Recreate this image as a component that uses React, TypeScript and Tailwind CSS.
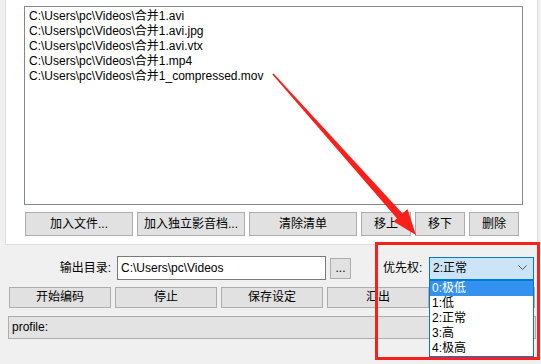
import React from "react";

const files = [
  "C:\\Users\\pc\\Videos\\合并1.avi",
  "C:\\Users\\pc\\Videos\\合并1.avi.jpg",
  "C:\\Users\\pc\\Videos\\合并1.avi.vtx",
  "C:\\Users\\pc\\Videos\\合并1.mp4",
  "C:\\Users\\pc\\Videos\\合并1_compressed.mov",
];

const priorities = ["0:极低", "1:低", "2:正常", "3:高", "4:极高"];

function Btn({ w, h, children }: { w: string; h: string; children: React.ReactNode }) {
  return (
    <div
      className={`${w} ${h} flex shrink-0 items-center justify-center border border-[#adadad] bg-[#e1e1e1]`}
    >
      {children}
    </div>
  );
}

export default function App() {
  return (
    <div className="relative h-[364px] w-[541px] overflow-hidden bg-[#f0f0f0] font-['Liberation_Sans','Noto_Sans_CJK_SC',sans-serif] text-[12px] leading-[15px] text-black">
      {/* file list panel */}
      <div className="ml-[5px] h-[245px] w-[533px] border-x border-b border-[#dcdcdc] bg-white pt-[6px]">
        <div className="ml-[18px] h-[199px] w-[499px] border border-[#828790] pl-[4px] pt-[2px]">
          {files.map((f) => (
            <div key={f} className="h-[15px] whitespace-nowrap">
              {f}
            </div>
          ))}
        </div>
        <div className="ml-[19px] mt-[7px] flex gap-[4px]">
          <Btn w="w-[108px]" h="h-[24px]">加入文件...</Btn>
          <Btn w="w-[108px]" h="h-[24px]">加入独立影音档...</Btn>
          <Btn w="w-[108px]" h="h-[24px]">清除清单</Btn>
          <Btn w="w-[50px]" h="h-[24px]">移上</Btn>
          <Btn w="w-[50px]" h="h-[24px]">移下</Btn>
          <Btn w="w-[50px]" h="h-[24px]">删除</Btn>
        </div>
      </div>

      {/* output dir + priority */}
      <div className="mt-[11px] flex items-center">
        <div className="w-[111px] text-right">输出目录:</div>
        <div className="ml-[6px] flex h-[24px] w-[209px] items-center border border-[#7a7a7a] bg-white pl-[3px]">
          C:\Users\pc\Videos
        </div>
        <div className="ml-[4px]">
          <Btn w="w-[21px]" h="h-[21px]">...</Btn>
        </div>
        <div className="ml-[32px] w-[46px]">优先权:</div>
        <div className="relative z-10">
          <div className="flex h-[23px] w-[105px] items-center justify-between border border-[#0078d7] bg-[#cce4f7] pl-[3px] pr-[6px]">
            <span>2:正常</span>
            <svg width="9" height="6" viewBox="0 0 9 6" fill="none">
              <path d="M0.5 0.5 L4.5 4.5 L8.5 0.5" stroke="#555" strokeWidth="1" />
            </svg>
          </div>
          <div className="absolute left-0 top-full w-[105px] border border-[#0078d7] bg-white">
            {priorities.map((p, i) => (
              <div
                key={p}
                className={
                  i === 0
                    ? "h-[15px] bg-[#3391f0] pl-[2px] text-white"
                    : "h-[15px] pl-[2px]"
                }
              >
                {p}
              </div>
            ))}
          </div>
        </div>
      </div>

      {/* action buttons */}
      <div className="ml-[9px] mt-[7px] flex gap-[4px]">
        <Btn w="w-[102px]" h="h-[21px]">开始编码</Btn>
        <Btn w="w-[102px]" h="h-[21px]">停止</Btn>
        <Btn w="w-[102px]" h="h-[21px]">保存设定</Btn>
        <Btn w="w-[102px]" h="h-[21px]">汇出</Btn>
        <Btn w="w-[102px]" h="h-[21px]">汇入</Btn>
      </div>

      <div className="ml-[8px] mt-[8px] flex h-[23px] w-[528px] items-center border border-[#adadad] bg-[#e3e3e3] pl-[3px]">
        profile:
      </div>

      {/* annotation */}
      <div className="absolute left-[375px] top-[242px] z-20 h-[118px] w-[165px] border-[3px] border-[#f8201a]" />
      <svg className="absolute left-0 top-0 z-20" width="541" height="364" viewBox="0 0 541 364">
        <polygon points="272.4,74.5 273.6,73.5 403,214 397.5,219" fill="#f8201a" />
        <polygon points="393.5,221.5 407.5,209 416,235" fill="#f8201a" />
      </svg>
    </div>
  );
}
